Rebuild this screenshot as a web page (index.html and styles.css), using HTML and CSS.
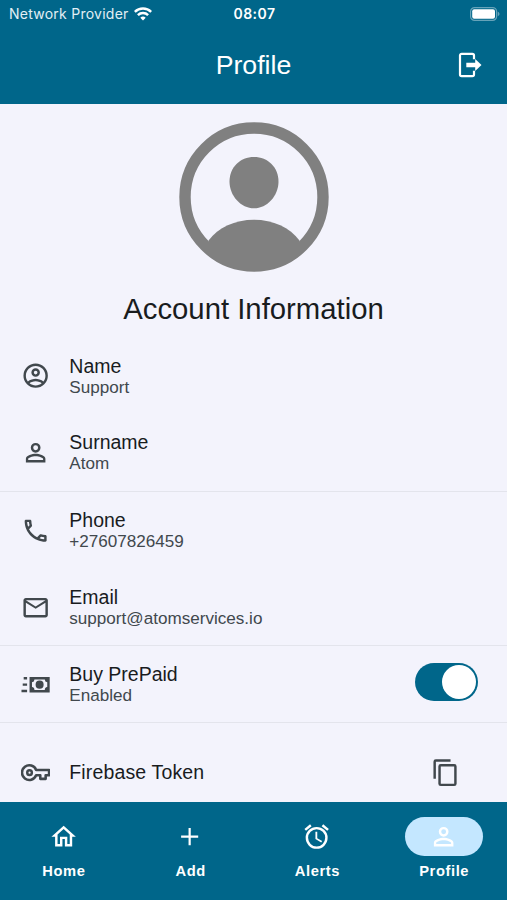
FILE: index.html
```html
<!DOCTYPE html>
<html lang="en">
<head>
  <meta charset="UTF-8">
  <title>Profile</title>
  <link rel="stylesheet" href="styles.css">
</head>
<body>

<div class="app">
  <header class="header">
    <div class="status-bar">
      <div class="carrier">
        <span>Network Provider</span>
        <svg class="wifi" viewBox="0 0 18 14">
          <g fill="none" stroke="#fff" stroke-width="2.5">
            <path d="M0.8 4.9a11.6 11.6 0 0 1 16.4 0"/>
            <path d="M3.9 8.2a7.2 7.2 0 0 1 10.2 0"/>
          </g>
          <path fill="#fff" d="M9 13.6 6.3 10.8a3.9 3.9 0 0 1 5.4 0z"/>
        </svg>
      </div>
      <span class="time">08:07</span>
      <svg class="battery" viewBox="0 0 30 14">
        <rect x="0.6" y="0.6" width="26" height="12.8" rx="4" fill="none" stroke="#fff" stroke-opacity="0.4" stroke-width="1.2"/>
        <rect x="2.2" y="2.2" width="22.8" height="9.6" rx="2" fill="#fff"/>
        <path d="M27.8 4.8v4.4c1-.4 1.7-1.2 1.7-2.2s-.7-1.8-1.7-2.2z" fill="#fff" fill-opacity="0.4"/>
      </svg>
    </div>
    <div class="title-bar">
      <h1>Profile</h1>
      <svg class="logout" viewBox="0 0 24 26">
        <path fill="none" stroke="#fff" stroke-width="2.2" stroke-linejoin="round" d="M16 7.2V3.5a1.700 1.700 0 0 0-1.700-1.700H3.700A1.700 1.700 0 0 0 2 3.500v19a1.700 1.700 0 0 0 1.700 1.700h10.600a1.700 1.700 0 0 0 1.700-1.700V18.800"/>
        <path fill="#fff" d="M8.300 10.800h8.900V7L23.500 13l-6.300 6V15.200H8.300z"/>
      </svg>
    </div>
  </header>

  <main class="content">
    <svg class="avatar" viewBox="0 0 150 150">
      <circle cx="75" cy="75" r="69" fill="none" stroke="#808080" stroke-width="11.4"/>
      <path fill="#808080" d="M75 35c14 0 24.500 10.500 24.500 24.500C99.500 74 88 86.300 75 86.300S50.500 74 50.500 59.500C50.500 45.500 61 35 75 35z"/>
      <path fill="#808080" d="M29.500 118.500C39 105.500 56 97.700 75 97.700s36 7.800 45.500 20.800L118 127C107 137 93.500 142 75 142s-32-5-43-15z"/>
    </svg>
    <h2>Account Information</h2>

    <div class="row">
      <svg class="icon" viewBox="0 0 24 24"><path d="M12 2A10 10 0 0 0 2 12A10 10 0 0 0 12 22A10 10 0 0 0 22 12A10 10 0 0 0 12 2M7.070 18.280C7.500 17.380 10.120 16.500 12 16.500C13.880 16.500 16.500 17.380 16.930 18.280C15.570 19.360 13.860 20 12 20C10.140 20 8.430 19.360 7.070 18.280M18.360 16.830C16.930 15.090 13.460 14.500 12 14.500C10.540 14.500 7.070 15.090 5.640 16.830C4.620 15.500 4 13.820 4 12C4 7.590 7.590 4 12 4C16.410 4 20 7.590 20 12C20 13.820 19.380 15.500 18.360 16.830M12 6C10.060 6 8.500 7.560 8.500 9.500C8.500 11.440 10.060 13 12 13C13.940 13 15.500 11.440 15.500 9.500C15.500 7.560 13.940 6 12 6M12 11A1.500 1.500 0 0 1 10.500 9.500A1.500 1.500 0 0 1 12 8A1.500 1.500 0 0 1 13.500 9.500A1.500 1.500 0 0 1 12 11Z"/></svg>
      <div class="text">
        <div class="label">Name</div>
        <div class="value">Support</div>
      </div>
    </div>

    <div class="row divider">
      <svg class="icon" viewBox="0 0 24 24"><path d="M12 4A4 4 0 0 1 16 8A4 4 0 0 1 12 12A4 4 0 0 1 8 8A4 4 0 0 1 12 4M12 6A2 2 0 0 0 10 8A2 2 0 0 0 12 10A2 2 0 0 0 14 8A2 2 0 0 0 12 6M12 13C14.670 13 20 14.330 20 17V20H4V17C4 14.330 9.330 13 12 13M12 14.900C9.030 14.900 5.900 16.360 5.900 17V18.100H18.100V17C18.100 16.360 14.970 14.900 12 14.900Z"/></svg>
      <div class="text">
        <div class="label">Surname</div>
        <div class="value">Atom</div>
      </div>
    </div>

    <div class="row">
      <svg class="icon" viewBox="0 0 24 24"><path d="M20 15.500C18.800 15.500 17.500 15.300 16.400 14.900C16.300 14.900 16.200 14.900 16.100 14.900C15.800 14.900 15.600 15 15.400 15.200L13.200 17.400C10.400 15.900 8 13.600 6.600 10.800L8.800 8.600C9.100 8.300 9.200 7.900 9 7.600C8.700 6.500 8.500 5.200 8.500 4C8.500 3.500 8 3 7.500 3H4C3.500 3 3 3.500 3 4C3 13.400 10.600 21 20 21C20.500 21 21 20.500 21 20V16.500C21 16 20.500 15.500 20 15.500M5 5H6.500C6.600 5.900 6.800 6.800 7 7.600L5.800 8.800C5.400 7.600 5.100 6.300 5 5M19 19C17.700 18.900 16.400 18.600 15.200 18.200L16.400 17C17.200 17.200 18.100 17.400 19 17.400V19Z"/></svg>
      <div class="text">
        <div class="label">Phone</div>
        <div class="value">+27607826459</div>
      </div>
    </div>

    <div class="row divider">
      <svg class="icon" viewBox="0 0 24 24"><path d="M22 6C22 4.900 21.100 4 20 4H4C2.900 4 2 4.900 2 6V18C2 19.100 2.900 20 4 20H20C21.100 20 22 19.100 22 18V6M20 6L12 11L4 6H20M20 18H4V8L12 13L20 8V18Z"/></svg>
      <div class="text">
        <div class="label">Email</div>
        <div class="value">support@atomservices.io</div>
      </div>
    </div>

    <div class="row divider">
      <svg class="icon" viewBox="0 0 24 24"><path fill-rule="evenodd" d="M7 5.700H23.500V18.400H7V5.700ZM11 7.700A2.300 2.300 0 0 1 9 10V14A2.300 2.300 0 0 1 11 16.400H19.500A2.300 2.300 0 0 1 21.500 14V10A2.300 2.300 0 0 1 19.500 7.700H11ZM15.250 8.700A3.300 3.300 0 1 1 15.250 15.300A3.300 3.300 0 1 1 15.250 8.700ZM2.200 5.800H5V7.800H2.200V5.800ZM1.400 11H5V13H1.400V11ZM0.400 16.200H5V18.200H0.400V16.200Z"/></svg>
      <div class="text">
        <div class="label">Buy PrePaid</div>
        <div class="value">Enabled</div>
      </div>
      <div class="switch"><div class="knob"></div></div>
    </div>

    <div class="row token">
      <svg class="icon" viewBox="0 0 24 24">
        <path fill="none" stroke="#41484d" stroke-width="2.100" stroke-linejoin="round" d="M12.400 9.800A6 6 0 1 0 12.400 14.200H15.800V17.100H20.200V14.200H23V9.800Z"/>
        <circle cx="7" cy="12" r="1.900" fill="none" stroke="#41484d" stroke-width="2"/>
      </svg>
      <div class="text">
        <div class="label">Firebase Token</div>
      </div>
      <svg class="icon copy" viewBox="0 0 24 24"><path d="M19 21H8V7H19M19 5H8A2 2 0 0 0 6 7V21A2 2 0 0 0 8 23H19A2 2 0 0 0 21 21V7A2 2 0 0 0 19 5M16 1H4A2 2 0 0 0 2 3V17H4V3H16V1Z"/></svg>
    </div>
  </main>

  <nav class="tabs">
    <div class="tab">
      <div class="pill">
        <svg class="icon" viewBox="0 0 24 24"><path d="M12 5.690L17 10.190V18H15V12H9V18H7V10.190L12 5.690M12 3L2 12H5V20H11V14H13V20H19V12H22"/></svg>
      </div>
      <span>Home</span>
    </div>
    <div class="tab">
      <div class="pill">
        <svg class="icon" viewBox="0 0 24 24"><path d="M19 12.900H12.900V19H11.100V12.900H5V11.100H11.100V5H12.900V11.100H19V12.900Z"/></svg>
      </div>
      <span>Add</span>
    </div>
    <div class="tab">
      <div class="pill">
        <svg class="icon" viewBox="0 0 24 24"><path d="M12 20A7 7 0 0 1 5 13A7 7 0 0 1 12 6A7 7 0 0 1 19 13A7 7 0 0 1 12 20M12 4A9 9 0 0 0 3 13A9 9 0 0 0 12 22A9 9 0 0 0 21 13A9 9 0 0 0 12 4M12.500 8H11V14L15.750 16.850L16.500 15.620L12.500 13.250V8M7.880 3.390L6.600 1.860L2 5.710L3.290 7.240L7.880 3.390M22 5.720L17.400 1.860L16.110 3.390L20.710 7.250L22 5.720Z"/></svg>
      </div>
      <span>Alerts</span>
    </div>
    <div class="tab active">
      <div class="pill">
        <svg class="icon" viewBox="0 0 24 24"><path d="M12 4A4 4 0 0 1 16 8A4 4 0 0 1 12 12A4 4 0 0 1 8 8A4 4 0 0 1 12 4M12 6A2 2 0 0 0 10 8A2 2 0 0 0 12 10A2 2 0 0 0 14 8A2 2 0 0 0 12 6M12 13C14.670 13 20 14.330 20 17V20H4V17C4 14.330 9.330 13 12 13M12 14.900C9.030 14.900 5.900 16.360 5.900 17V18.100H18.100V17C18.100 16.360 14.970 14.900 12 14.900Z"/></svg>
      </div>
      <span>Profile</span>
    </div>
  </nav>
</div>

</body>
</html>
```
FILE: styles.css
```css
* { box-sizing: border-box; }
body {
  margin: 0;
  font-family: "Liberation Sans", Arial, sans-serif;
  background: #f3f3fc;
  color: #191c1e;
}
h1, h2 {
  margin: 0;
  font-weight: 400;
}
svg {
  display: block;
  flex-shrink: 0;
}
.app {
  display: flex;
  flex-direction: column;
  height: 900px;
  overflow: hidden;
}
.header {
  height: 103.5px;
  background: #00668a;
  color: #fff;
}
.status-bar {
  display: grid;
  grid-template-columns: 1fr auto 1fr;
  align-items: center;
  height: 27px;
  padding: 0 7px 0 9px;
  font-family: Inter, sans-serif;
  font-size: 14px;
}
.carrier {
  display: flex;
  align-items: center;
  gap: 5px;
  letter-spacing: 0.25px;
  white-space: nowrap;
  color: #e2eff5;
}
.wifi {
  width: 18px;
  height: 14px;
}
.time {
  font-weight: 600;
  letter-spacing: 0.5px;
}
.battery {
  width: 30px;
  height: 14px;
  justify-self: end;
}
.title-bar {
  display: grid;
  grid-template-columns: 1fr auto 1fr;
  align-items: center;
  height: 76px;
}
.title-bar h1 {
  grid-column: 2;
  font-size: 26.7px;
}
.logout {
  width: 24px;
  height: 26px;
  justify-self: end;
  margin-right: 25px;
}
.content {
  flex: 1;
  min-height: 0;
  overflow: hidden;
}
.avatar {
  width: 150px;
  height: 150px;
  margin: 18px auto 0;
}
h2 {
  margin: 17px 0 10px;
  font-size: 29.3px;
  line-height: 39px;
  text-align: center;
}
.row {
  display: flex;
  align-items: center;
  height: 77.2px;
  padding: 0 29px 0 20.5px;
}
.divider {
  border-bottom: 1px solid #e3e4ec;
}
.icon {
  width: 29.3px;
  height: 29.3px;
  fill: #41484d;
}
.text {
  flex: 1;
  margin-left: 19.5px;
}
.label {
  font-size: 19.5px;
  line-height: 22px;
}
.value {
  font-size: 17.1px;
  line-height: 21px;
  color: #41484d;
}
.switch {
  display: flex;
  justify-content: flex-end;
  width: 63px;
  height: 38px;
  margin-bottom: 4px;
  padding: 2px;
  border-radius: 19px;
  background: #00668a;
}
.knob {
  width: 34px;
  height: 34px;
  border-radius: 50%;
  background: #fff;
}
.token {
  height: 98px;
  padding-right: 47px;
}
.token .label {
  letter-spacing: 0.15px;
}
.tabs {
  display: flex;
  height: 98px;
  background: #00668a;
}
.tab {
  flex: 1;
  display: flex;
  flex-direction: column;
  align-items: center;
  padding-top: 15px;
  color: #fff;
  font-size: 14.7px;
  font-weight: 700;
  letter-spacing: 0.6px;
}
.tab .icon {
  fill: #fff;
}
.tab span {
  margin: 6px 0 0 1px;
  line-height: 18px;
}
.pill {
  display: flex;
  align-items: center;
  justify-content: center;
  width: 78px;
  height: 39px;
  border-radius: 20px;
}
.active .pill {
  background: #c4e7ff;
}
```
